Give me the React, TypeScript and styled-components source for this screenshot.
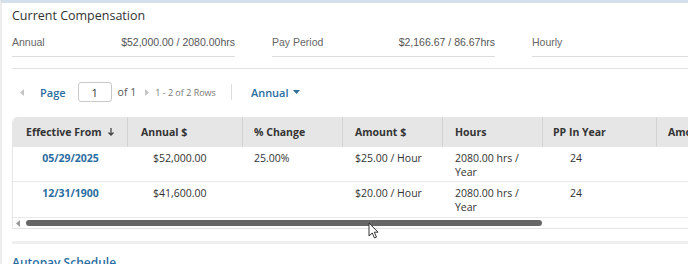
import styled, { createGlobalStyle } from "styled-components";

const GlobalStyle = createGlobalStyle`
  html, body {
    margin: 0;
    padding: 0;
    background: #ffffff;
    overflow: hidden;
  }
  body {
    font-family: "Open Sans", "Liberation Sans", Arial, sans-serif;
    color: #333;
  }
`;

const BLUE = "#2b6d9f";

const Page = styled.div`
  position: relative;
  height: 264px;
  border-top: 3px solid #d3e0ea;
  border-left: 2px solid #ececec;
  box-sizing: border-box;
  overflow: hidden;
`;

const Panel = styled.div`
  padding-left: 10px;
  width: 900px;
`;

const Title = styled.div`
  margin-top: 4px;
  font-size: 12.5px;
  line-height: 18px;
  color: #333;
`;

const Summary = styled.div`
  display: flex;
  gap: 37px;
  margin-top: 9px;
`;

const Field = styled.div`
  width: 223px;
  display: flex;
  justify-content: space-between;
  padding-bottom: 6px;
  border-bottom: 1px solid #dcdcdc;
  font-family: "Liberation Sans", Arial, sans-serif;
  font-size: 10.5px;
  line-height: 16px;
  color: #666;
`;

const FieldValue = styled.span`
  color: #555;
`;

const Divider = styled.div<{ $top: number; $size?: number }>`
  margin-top: ${(p) => p.$top}px;
  height: ${(p) => p.$size ?? 1}px;
  background: ${(p) => ((p.$size ?? 1) > 1 ? "#efefef" : "#e2e2e2")};
`;

const Pager = styled.div`
  display: flex;
  align-items: center;
  height: 22px;
  margin-top: 12px;
  padding-left: 8px;
  font-size: 11px;
`;

const PageLink = styled.span`
  color: ${BLUE};
  font-weight: 600;
  margin-left: 16px;
`;

const PageInput = styled.div`
  width: 34px;
  height: 20px;
  box-sizing: border-box;
  border: 1px solid #c9c9c9;
  border-radius: 3px;
  margin-left: 12px;
  display: flex;
  align-items: center;
  justify-content: center;
  color: #333;
  font-size: 11px;
`;

const PageOf = styled.span`
  margin-left: 6px;
  font-size: 10.5px;
  color: #555;
`;

const NextArrow = styled.span`
  display: flex;
  margin-left: 9px;
`;

const RowCount = styled.span`
  margin-left: 6px;
  font-size: 9px;
  color: #777;
`;

const Sep = styled.div`
  width: 1px;
  height: 16px;
  background: #dedede;
  margin-left: 15px;
`;

const ViewSelect = styled.span`
  display: flex;
  align-items: center;
  gap: 4px;
  margin-left: 19px;
  color: ${BLUE};
  font-weight: 600;
`;

const Table = styled.div`
  margin-top: 14px;
  border-left: 1px solid #e6e6e6;
  border-top-left-radius: 6px;
  overflow: hidden;
`;

const cols = "115px 115px 100px 100px 100px 114px 120px";

const HeadRow = styled.div`
  display: grid;
  grid-template-columns: ${cols};
  height: 30px;
  background: #e6e6e6;
`;

const HeadCell = styled.div<{ $pad?: number }>`
  display: flex;
  align-items: center;
  justify-content: space-between;
  padding: 0 12px 0 ${(p) => p.$pad ?? 12}px;
  border-right: 1px solid #d3d3d3;
  font-size: 10.5px;
  font-weight: 700;
  color: #333;
  white-space: nowrap;
`;

const BodyRow = styled.div<{ $h: number }>`
  display: grid;
  grid-template-columns: ${cols};
  height: ${(p) => p.$h}px;
  box-sizing: border-box;
  border-bottom: 1px solid #e8e8e8;
`;

const Cell = styled.div<{ $pad?: number; $center?: boolean; $link?: boolean }>`
  padding: 4px 12px 0 ${(p) => p.$pad ?? 12}px;
  text-align: ${(p) => (p.$center ? "center" : "left")};
  font-size: 10.5px;
  line-height: 14px;
  color: ${(p) => (p.$link ? BLUE : "#333")};
  font-weight: ${(p) => (p.$link ? 700 : 400)};
`;

const ScrollTrack = styled.div`
  display: flex;
  align-items: center;
  height: 10px;
  border-bottom: 1px solid #e4e4e4;
  padding-left: 3px;
`;

const ScrollThumb = styled.div`
  width: 516px;
  height: 6px;
  border-radius: 3px;
  background: #666;
  margin-left: 6px;
`;

const SectionTitle = styled.div`
  margin-top: 10px;
  font-size: 12px;
  font-weight: 600;
  color: ${BLUE};
`;

const Cursor = styled.svg`
  position: absolute;
  left: 366px;
  top: 219px;
`;

const Tri = ({ dir, color }: { dir: "l" | "r" | "d"; color: string }) => {
  const pts = dir === "l" ? "4,0 4,7 0,3.5" : dir === "r" ? "0,0 0,7 4,3.5" : "0,0 7,0 3.5,4";
  return (
    <svg width={dir === "d" ? 7 : 4} height={dir === "d" ? 4 : 7}>
      <polygon points={pts} fill={color} />
    </svg>
  );
};

const SortArrow = () => (
  <svg width="8" height="10" viewBox="0 0 8 10">
    <path d="M4 1v7M1.5 5.5L4 8l2.5-2.5" stroke="#444" strokeWidth="1.3" fill="none" />
  </svg>
);

const rows = [
  { date: "05/29/2025", annual: "$52,000.00", change: "25.00%", amount: "$25.00 / Hour", pp: "24", h: 35 },
  { date: "12/31/1900", annual: "$41,600.00", change: "", amount: "$20.00 / Hour", pp: "24", h: 36 },
];

export default function App() {
  return (
    <>
      <GlobalStyle />
      <Page>
        <Panel>
          <Title>Current Compensation</Title>
          <Summary>
            <Field>
              <span>Annual</span>
              <FieldValue>$52,000.00 / 2080.00hrs</FieldValue>
            </Field>
            <Field>
              <span>Pay Period</span>
              <FieldValue>$2,166.67 / 86.67hrs</FieldValue>
            </Field>
            <Field>
              <span>Hourly</span>
            </Field>
          </Summary>
          <Divider $top={11} />
          <Pager>
            <Tri dir="l" color="#c4c4c4" />
            <PageLink>Page</PageLink>
            <PageInput>1</PageInput>
            <PageOf>of 1</PageOf>
            <NextArrow>
              <Tri dir="r" color="#c4c4c4" />
            </NextArrow>
            <RowCount>1 - 2 of 2 Rows</RowCount>
            <Sep />
            <ViewSelect>
              Annual <Tri dir="d" color={BLUE} />
            </ViewSelect>
          </Pager>
          <Table>
            <HeadRow>
              <HeadCell $pad={13}>
                Effective From <SortArrow />
              </HeadCell>
              <HeadCell $pad={13}>Annual $</HeadCell>
              <HeadCell $pad={11}>% Change</HeadCell>
              <HeadCell>Amount $</HeadCell>
              <HeadCell>Hours</HeadCell>
              <HeadCell $pad={10}>PP In Year</HeadCell>
              <HeadCell $pad={11}>Amount Per Period</HeadCell>
            </HeadRow>
            {rows.map((r) => (
              <BodyRow key={r.date} $h={r.h}>
                <Cell $center $link>
                  {r.date}
                </Cell>
                <Cell $pad={25}>{r.annual}</Cell>
                <Cell $pad={11}>{r.change}</Cell>
                <Cell>{r.amount}</Cell>
                <Cell>2080.00 hrs / Year</Cell>
                <Cell $pad={27}>{r.pp}</Cell>
                <Cell />
              </BodyRow>
            ))}
            <ScrollTrack>
              <Tri dir="l" color="#999" />
              <ScrollThumb />
            </ScrollTrack>
          </Table>
          <Divider $top={12} $size={3} />
          <SectionTitle>Autopay Schedule</SectionTitle>
        </Panel>
        <Cursor width="12" height="18" viewBox="0 0 12 18">
          <path d="M1 1v13l3.2-3 2.3 5 2-.9-2.2-4.9H10z" fill="#fff" stroke="#333" strokeWidth="1" />
        </Cursor>
      </Page>
    </>
  );
}
